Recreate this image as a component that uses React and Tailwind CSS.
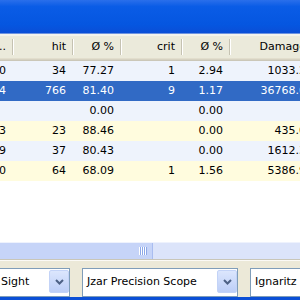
import React from "react";

const rows = [
  { c0: "0", hit: "34", p1: "77.27", crit: "1", p2: "2.94", dmg: "1033.25", bg: "bg-[#EEF3FC]" },
  { c0: "4", hit: "766", p1: "81.40", crit: "9", p2: "1.17", dmg: "36768.62", bg: "bg-[#316AC5]", sel: true },
  { c0: "", hit: "", p1: "0.00", crit: "", p2: "0.00", dmg: "", bg: "bg-[#EEF3FC]" },
  { c0: "3", hit: "23", p1: "88.46", crit: "", p2: "0.00", dmg: "435.00", bg: "bg-[#FFFCDE]" },
  { c0: "9", hit: "37", p1: "80.43", crit: "", p2: "0.00", dmg: "1612.37", bg: "bg-[#EEF3FC]" },
  { c0: "0", hit: "64", p1: "68.09", crit: "1", p2: "1.56", dmg: "5386.94", bg: "bg-[#FFFCDE]" },
];

function Sep() {
  return <div className="w-[2px] h-[16px] shrink-0 border-l border-l-[#C5C2B2] border-r border-r-white" />;
}

function HCell({ w, children, pr = "pr-[6px]" }) {
  return (
    <div className={`${w} shrink-0 flex items-center h-full`}>
      <div className={`flex-1 flex justify-end whitespace-nowrap ${pr} min-w-0`}>{children}</div>
      <Sep />
    </div>
  );
}

function Cell({ w, children }) {
  return (
    <div className={`${w} shrink-0 flex justify-end items-center whitespace-nowrap pr-[8px] h-full`}>
      {children}
    </div>
  );
}

function Chevron() {
  return (
    <svg width="9" height="6" viewBox="0 0 9 6">
      <path d="M1 1 L4.5 4.5 L8 1" fill="none" stroke="#4D6185" strokeWidth="2" />
    </svg>
  );
}

function Combo({ className, text, textClass }) {
  return (
    <div className={`h-[29px] shrink-0 bg-white border border-[#7F9DB9] flex items-start ${className}`}>
      <div className={`flex-1 h-full flex items-center whitespace-nowrap overflow-hidden ${textClass}`}>{text}</div>
      <div className="mt-[1px] mr-[0px] w-[20px] h-[23px] shrink-0 rounded-[2px] border border-[#C3D3F7] bg-[linear-gradient(to_bottom,#DCE6FD,#BCCEF7)] flex items-center justify-center">
        <Chevron />
      </div>
    </div>
  );
}

export default function App() {
  return (
    <div className="w-[300px] h-[300px] overflow-hidden flex flex-col font-['DejaVu_Sans',sans-serif] text-[11px] text-black bg-white">
      {/* title bar */}
      <div className="h-[33px] shrink-0 bg-[linear-gradient(to_bottom,#2A6FEB_0%,#0A5CE6_20%,#0556E0_75%,#0A4ED6_100%)]" />
      <div className="h-[1px] shrink-0 bg-[#6D93E0]" />
      <div className="h-[2px] shrink-0 bg-[#F4F3EC]" />
      {/* header */}
      <div className="h-[25px] shrink-0 flex flex-col bg-[#EBEADB]">
        <div className="h-[22px] flex">
          <HCell w="w-[14px]">...</HCell>
          <HCell w="w-[60px]">hit</HCell>
          <HCell w="w-[48px]">Ø %</HCell>
          <HCell w="w-[61px]">crit</HCell>
          <HCell w="w-[48px]">Ø %</HCell>
          <HCell w="w-[90px]" pr="pr-[13px]">Damage</HCell>
        </div>
        <div className="h-[1px] bg-[#E2DECD]" />
        <div className="h-[1px] bg-[#D6D2C2]" />
        <div className="h-[1px] bg-[#CBC7B8]" />
      </div>
      {/* rows */}
      <div className="flex flex-col shrink-0">
        {rows.map((r, i) => (
          <div key={i} className={`h-[20px] flex ${r.bg} ${r.sel ? "text-white" : ""}`}>
            <Cell w="w-[14px]">{r.c0}</Cell>
            <Cell w="w-[60px]">{r.hit}</Cell>
            <Cell w="w-[48px]">{r.p1}</Cell>
            <Cell w="w-[61px]">{r.crit}</Cell>
            <Cell w="w-[48px]">{r.p2}</Cell>
            <Cell w="w-[90px]">{r.dmg}</Cell>
          </div>
        ))}
      </div>
      <div className="flex-1 bg-white" />
      {/* scrollbar */}
      <div className="h-[17px] shrink-0 flex bg-[#DCE4FA] border-t border-[#EEF2FD]">
        <div className="w-[153px] shrink-0 bg-[#C6D4F8] border-r border-[#A9BDF0] flex items-center justify-end pr-[5px]">
          <div className="flex gap-0 h-[8px]">
            <div className="w-[1px] bg-white" />
            <div className="w-[1px] bg-[#8DA8E8]" />
            <div className="w-[1px] bg-white" />
            <div className="w-[1px] bg-[#8DA8E8]" />
            <div className="w-[1px] bg-white" />
            <div className="w-[1px] bg-[#8DA8E8]" />
            <div className="w-[1px] bg-white" />
            <div className="w-[1px] bg-[#8DA8E8]" />
          </div>
        </div>
      </div>
      <div className="h-[1px] shrink-0 bg-[#C9C6B8]" />
      <div className="h-[1px] shrink-0 bg-[#FBFAF6]" />
      {/* bottom panel */}
      <div className="h-[36px] shrink-0 bg-[#ECE9D8] flex items-start pt-[7px] gap-[12px]">
        <Combo className="w-[71px] ml-[-1px]" text="Sight" textClass="pl-[1px]" />
        <Combo className="w-[156px]" text="Jzar Precision Scope" textClass="pl-[4px]" />
        <Combo className="w-[120px]" text="Ignaritz" textClass="pl-[4px]" />
      </div>
      <div className="h-[3px] shrink-0 bg-[#0B4FD6]" />
    </div>
  );
}
